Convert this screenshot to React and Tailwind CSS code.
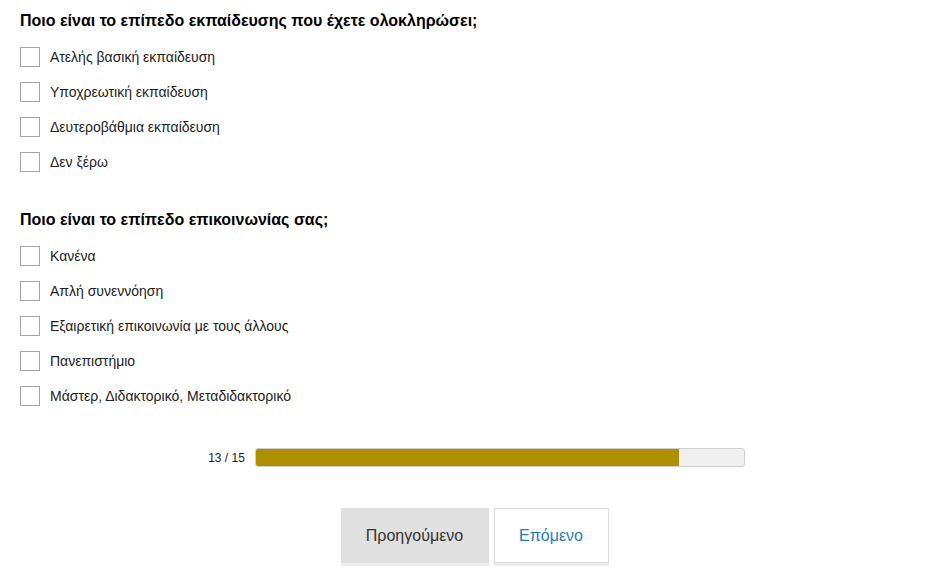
import React from 'react';

const educationOptions = [
    'Ατελής βασική εκπαίδευση',
    'Υποχρεωτική εκπαίδευση',
    'Δευτεροβάθμια εκπαίδευση',
    'Δεν ξέρω',
];

const communicationOptions = [
    'Κανένα',
    'Απλή συνεννόηση',
    'Εξαιρετική επικοινωνία με τους άλλους',
    'Πανεπιστήμιο',
    'Μάστερ, Διδακτορικό, Μεταδιδακτορικό',
];

const CheckRow = ({ label }) => (
    <label className="flex items-center h-5">
        <span className="w-5 h-5 border border-[#a6a6a6] bg-white shrink-0" />
        <span className="ml-[10px] text-[14px] leading-5 text-[#222]">{label}</span>
    </label>
);

const Question = ({ title, options, className }) => (
    <div className={className}>
        <h3 className="text-[16px] leading-5 font-bold text-black">{title}</h3>
        <div className="flex flex-col gap-[15px] mt-4">
            {options.map((opt) => (
                <CheckRow key={opt} label={opt} />
            ))}
        </div>
    </div>
);

const App = () => {
    const current = 13;
    const total = 15;

    return (
        <div className="w-[949px] h-[573px] bg-white overflow-hidden font-['Liberation_Sans',Arial,sans-serif]">
            <div className="pl-5 pt-[11px]">
                <Question title="Ποιο είναι το επίπεδο εκπαίδευσης που έχετε ολοκληρώσει;" options={educationOptions} />
                <Question title="Ποιο είναι το επίπεδο επικοινωνίας σας;" options={communicationOptions} className="mt-[38px]" />
            </div>

            {/* Πρόοδος */}
            <div className="flex items-center justify-center mt-[42px] pl-1">
                <span className="text-[12px] text-[#222] mr-[10px]">{current} / {total}</span>
                <div className="w-[490px] h-[19px] border border-[#cfcfcf] rounded-[3px] bg-[#f0f0f0] overflow-hidden">
                    <div className="h-full bg-[#ad8f00]" style={{ width: `${(current / total) * 100}%` }} />
                </div>
            </div>

            {/* Κουμπιά */}
            <div className="flex justify-center gap-[5px] mt-[41px]">
                <button className="w-[148px] h-[55px] bg-[#e0e0e0] text-[#333] text-[16px] shadow-[0_3px_0_#ececec]">
                    Προηγούμενο
                </button>
                <button className="w-[115px] h-[55px] bg-white border border-[#dcdcdc] text-[#2878bd] text-[16px] shadow-[0_3px_0_#ececec]">
                    Επόμενο
                </button>
            </div>
        </div>
    );
};

export default App;
